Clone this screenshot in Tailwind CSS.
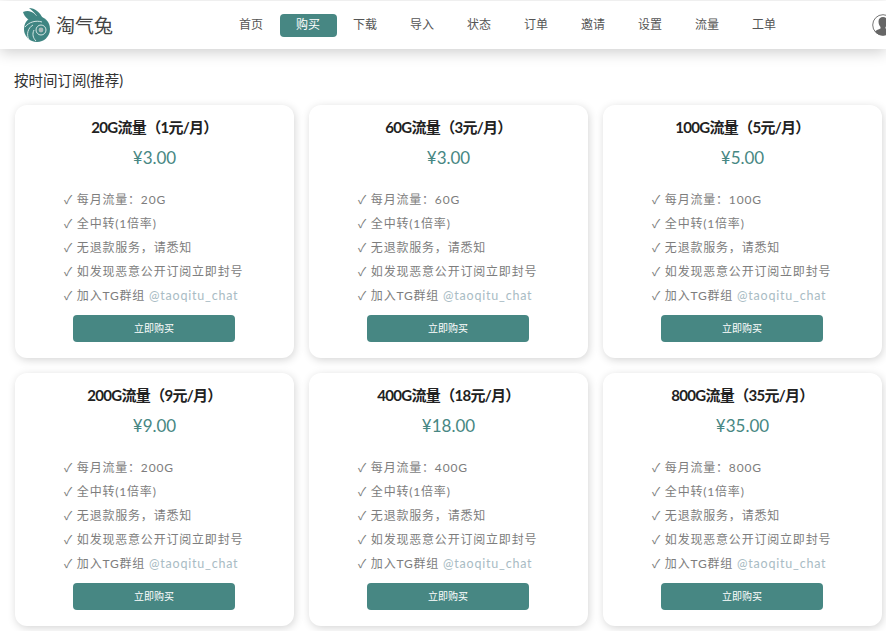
<!DOCTYPE html>
<html lang="zh-CN">
<head>
  <meta charset="UTF-8">
  <meta name="viewport" content="width=device-width, initial-scale=1.0">
  <title>淘气兔</title>
  <script src="https://cdn.jsdelivr.net/npm/@tailwindcss/browser@4"></script>
</head>
<body class="h-[631px] w-[886px] overflow-hidden bg-white text-[#333] font-['Lato','Noto_Sans_CJK_SC',sans-serif]">
  <header class="mt-px flex h-[48px] items-center overflow-hidden bg-white shadow-[0_3px_14px_rgba(0,0,0,0.2)] relative">
    <div class="ml-[22px] flex w-[200.5px] shrink-0 items-center gap-[4px]">
      <svg class="h-[34px] w-[30px] shrink-0" viewBox="0 0 30 34">
        <path d="M1 4c6-3 13 0 16 9-7 2-14-2-16-9z" fill="#3f8582"/>
        <path d="M7 0c6 0 11 4 14 11-2 1-3 1-4 1C15 7 11 3 7 0z" fill="#3f8582"/>
        <circle cx="15" cy="21" r="13" fill="#3f8582"/>
        <path d="M3 19c4-5 11-7 17-5M7 32c-3-6-1-12 4-15M14 33c-3-3-4-7-2-11" fill="none" stroke="#e6f0ef" stroke-width="0.9"/>
        <circle cx="19" cy="22" r="5" fill="none" stroke="#d5e6e4" stroke-width="1"/>
        <circle cx="19" cy="22" r="2.400" fill="#a9b8b8"/>
      </svg>
      <span class="text-[19px] leading-none text-[#444]">淘气兔</span>
    </div>
    <nav class="flex text-[12px] text-[#555]">
      <a class="flex h-[23px] w-[57px] items-center justify-center">首页</a>
      <a class="flex h-[23px] w-[57px] items-center justify-center rounded-[4px] bg-[#478783] text-white">购买</a>
      <a class="flex h-[23px] w-[57px] items-center justify-center">下载</a>
      <a class="flex h-[23px] w-[57px] items-center justify-center">导入</a>
      <a class="flex h-[23px] w-[57px] items-center justify-center">状态</a>
      <a class="flex h-[23px] w-[57px] items-center justify-center">订单</a>
      <a class="flex h-[23px] w-[57px] items-center justify-center">邀请</a>
      <a class="flex h-[23px] w-[57px] items-center justify-center">设置</a>
      <a class="flex h-[23px] w-[57px] items-center justify-center">流量</a>
      <a class="flex h-[23px] w-[57px] items-center justify-center">工单</a>
    </nav>
    <svg class="ml-[79.5px] h-[22px] w-[22px] shrink-0" viewBox="0 0 22 22">
      <circle cx="11" cy="11" r="10.3" fill="#fff" stroke="#666" stroke-width="0.9"/>
      <path d="M6.5 7.5C6.5 4.5 8.5 3 11 3s4.500 1.500 4.500 4.500c0 2.500-1 4.500-2 5.500v1.500c2 1 4 1.500 5.500 3A10 10 0 0 1 3 17.500c1.500-1.500 3.500-2 5.500-3V13c-1-1-2-3-2-5.500z" fill="#666"/>
    </svg>
  </header>

  <h2 class="mt-[22px] ml-[14px] text-[14.5px] leading-[20px] text-[#333]">按时间订阅(推荐)</h2>

  <main class="mt-[14px] ml-[15px] grid w-[867px] grid-cols-[repeat(3,279px)] gap-[15px]">
    <section class="h-[253px] rounded-[12px] bg-white pt-[13px] shadow-[1px_2px_8px_rgba(0,0,0,0.17)]">
      <h3 class="text-center text-[15px] leading-[18px] font-bold tracking-[-0.7px] text-[#222]">20G流量（1元/月）</h3>
      <p class="mt-[10px] text-center text-[17px] leading-[24px] text-[#478783]">¥3.00</p>
      <ul class="mt-[18px] ml-[49px] text-[12px] leading-[24px] tracking-[0.8px] text-[#7d7d7d]">
        <li>✓ 每月流量：20G</li>
        <li>✓ 全中转(1倍率)</li>
        <li>✓ 无退款服务，请悉知</li>
        <li>✓ 如发现恶意公开订阅立即封号</li>
        <li>✓ 加入TG群组 <span class="text-[12.5px] text-[#a9bcc4]">@taoqitu_chat</span></li>
      </ul>
      <button class="mt-[7px] ml-[58px] block h-[27px] w-[162px] rounded-[4px] bg-[#478783] text-[10px] text-white">立即购买</button>
    </section>
    <section class="h-[253px] rounded-[12px] bg-white pt-[13px] shadow-[1px_2px_8px_rgba(0,0,0,0.17)]">
      <h3 class="text-center text-[15px] leading-[18px] font-bold tracking-[-0.7px] text-[#222]">60G流量（3元/月）</h3>
      <p class="mt-[10px] text-center text-[17px] leading-[24px] text-[#478783]">¥3.00</p>
      <ul class="mt-[18px] ml-[49px] text-[12px] leading-[24px] tracking-[0.8px] text-[#7d7d7d]">
        <li>✓ 每月流量：60G</li>
        <li>✓ 全中转(1倍率)</li>
        <li>✓ 无退款服务，请悉知</li>
        <li>✓ 如发现恶意公开订阅立即封号</li>
        <li>✓ 加入TG群组 <span class="text-[12.5px] text-[#a9bcc4]">@taoqitu_chat</span></li>
      </ul>
      <button class="mt-[7px] ml-[58px] block h-[27px] w-[162px] rounded-[4px] bg-[#478783] text-[10px] text-white">立即购买</button>
    </section>
    <section class="h-[253px] rounded-[12px] bg-white pt-[13px] shadow-[1px_2px_8px_rgba(0,0,0,0.17)]">
      <h3 class="text-center text-[15px] leading-[18px] font-bold tracking-[-0.7px] text-[#222]">100G流量（5元/月）</h3>
      <p class="mt-[10px] text-center text-[17px] leading-[24px] text-[#478783]">¥5.00</p>
      <ul class="mt-[18px] ml-[49px] text-[12px] leading-[24px] tracking-[0.8px] text-[#7d7d7d]">
        <li>✓ 每月流量：100G</li>
        <li>✓ 全中转(1倍率)</li>
        <li>✓ 无退款服务，请悉知</li>
        <li>✓ 如发现恶意公开订阅立即封号</li>
        <li>✓ 加入TG群组 <span class="text-[12.5px] text-[#a9bcc4]">@taoqitu_chat</span></li>
      </ul>
      <button class="mt-[7px] ml-[58px] block h-[27px] w-[162px] rounded-[4px] bg-[#478783] text-[10px] text-white">立即购买</button>
    </section>
    <section class="h-[253px] rounded-[12px] bg-white pt-[13px] shadow-[1px_2px_8px_rgba(0,0,0,0.17)]">
      <h3 class="text-center text-[15px] leading-[18px] font-bold tracking-[-0.7px] text-[#222]">200G流量（9元/月）</h3>
      <p class="mt-[10px] text-center text-[17px] leading-[24px] text-[#478783]">¥9.00</p>
      <ul class="mt-[18px] ml-[49px] text-[12px] leading-[24px] tracking-[0.8px] text-[#7d7d7d]">
        <li>✓ 每月流量：200G</li>
        <li>✓ 全中转(1倍率)</li>
        <li>✓ 无退款服务，请悉知</li>
        <li>✓ 如发现恶意公开订阅立即封号</li>
        <li>✓ 加入TG群组 <span class="text-[12.5px] text-[#a9bcc4]">@taoqitu_chat</span></li>
      </ul>
      <button class="mt-[7px] ml-[58px] block h-[27px] w-[162px] rounded-[4px] bg-[#478783] text-[10px] text-white">立即购买</button>
    </section>
    <section class="h-[253px] rounded-[12px] bg-white pt-[13px] shadow-[1px_2px_8px_rgba(0,0,0,0.17)]">
      <h3 class="text-center text-[15px] leading-[18px] font-bold tracking-[-0.7px] text-[#222]">400G流量（18元/月）</h3>
      <p class="mt-[10px] text-center text-[17px] leading-[24px] text-[#478783]">¥18.00</p>
      <ul class="mt-[18px] ml-[49px] text-[12px] leading-[24px] tracking-[0.8px] text-[#7d7d7d]">
        <li>✓ 每月流量：400G</li>
        <li>✓ 全中转(1倍率)</li>
        <li>✓ 无退款服务，请悉知</li>
        <li>✓ 如发现恶意公开订阅立即封号</li>
        <li>✓ 加入TG群组 <span class="text-[12.5px] text-[#a9bcc4]">@taoqitu_chat</span></li>
      </ul>
      <button class="mt-[7px] ml-[58px] block h-[27px] w-[162px] rounded-[4px] bg-[#478783] text-[10px] text-white">立即购买</button>
    </section>
    <section class="h-[253px] rounded-[12px] bg-white pt-[13px] shadow-[1px_2px_8px_rgba(0,0,0,0.17)]">
      <h3 class="text-center text-[15px] leading-[18px] font-bold tracking-[-0.7px] text-[#222]">800G流量（35元/月）</h3>
      <p class="mt-[10px] text-center text-[17px] leading-[24px] text-[#478783]">¥35.00</p>
      <ul class="mt-[18px] ml-[49px] text-[12px] leading-[24px] tracking-[0.8px] text-[#7d7d7d]">
        <li>✓ 每月流量：800G</li>
        <li>✓ 全中转(1倍率)</li>
        <li>✓ 无退款服务，请悉知</li>
        <li>✓ 如发现恶意公开订阅立即封号</li>
        <li>✓ 加入TG群组 <span class="text-[12.5px] text-[#a9bcc4]">@taoqitu_chat</span></li>
      </ul>
      <button class="mt-[7px] ml-[58px] block h-[27px] w-[162px] rounded-[4px] bg-[#478783] text-[10px] text-white">立即购买</button>
    </section>
  </main>
</body>
</html>
